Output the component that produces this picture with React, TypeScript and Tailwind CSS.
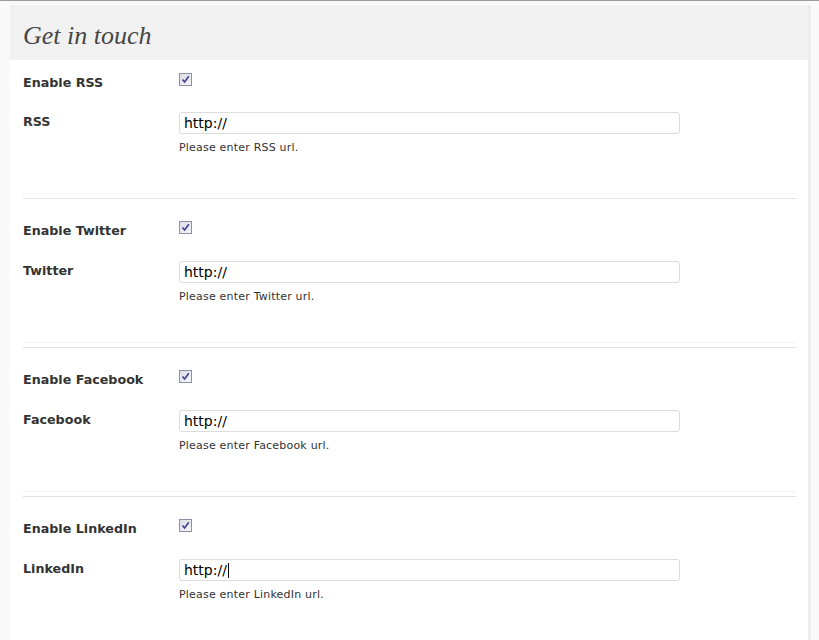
import React from "react";

const sections = [
  { name: "RSS" },
  { name: "Twitter" },
  { name: "Facebook" },
  { name: "LinkedIn", cursor: true },
];

function Check() {
  return (
    <span className="flex h-[13px] w-[13px] items-center justify-center border border-[#8e90a8] bg-gradient-to-br from-[#dcdce6] to-[#f4f4f8]">
      <svg width="9" height="9" viewBox="0 0 9 9">
        <path d="M1.5 4.5 L3.6 7 L7.8 1.2" fill="none" stroke="#3d3f8f" strokeWidth="1.6" />
      </svg>
    </span>
  );
}

export default function App() {
  return (
    <div className="min-h-[640px] w-[819px] bg-[#f9f9f9] font-['DejaVu_Sans',sans-serif] text-[#333]">
      <div className="h-px bg-[#9c9c9c]" />
      <div className="h-1" />
      <div className="ml-[10px] w-[801px] border-r-[3px] border-[#ececec] bg-white min-h-[635px]">
        <div className="h-[55px] bg-[#f1f1f1] pl-[13px] pt-[16px]">
          <h2 className="font-['Liberation_Serif',serif] text-[26px] italic leading-[30px] text-[#464646]">
            Get in touch
          </h2>
        </div>
        <div className="pl-[13px] pr-[12px]">
          {sections.map((s, i) => (
            <div key={s.name}>
              {i > 0 && (
                <div>
                  <div className="h-px bg-[#f3f3f3]" />
                  <div className="h-[4px]" />
                  <div className="h-px bg-[#e3e3e3]" />
                </div>
              )}
              <div className={i === 0 ? "pt-[12px] pb-[39px]" : "pt-[21px] pb-[39px]"}>
                <div className="flex h-[20px] items-center">
                  <div className="w-[156px] pt-[2px] text-[12.7px] font-bold leading-[20px]">Enable {s.name}</div>
                  <div className="-mt-[5px]">
                    <Check />
                  </div>
                </div>
                <div className={(i === 0 ? "mt-[20px]" : "mt-[21px]") + " flex"}>
                  <div className="w-[156px] pt-[1px] text-[12.7px] font-bold leading-[18px]">{s.name}</div>
                  <div>
                    <div className="flex h-[22px] w-[501px] items-center rounded-[3px] border border-[#dcdcdc] bg-white pl-[4px] text-[14px] text-black">
                      <span>http://</span>
                      {s.cursor && <span className="ml-px h-[15px] w-px bg-black" />}
                    </div>
                    <div className="mt-[8px] text-[11px] leading-[12px] tracking-[0.2px] text-[#333]">
                      Please enter {s.name} url.
                    </div>
                  </div>
                </div>
              </div>
            </div>
          ))}
        </div>
      </div>
    </div>
  );
}
